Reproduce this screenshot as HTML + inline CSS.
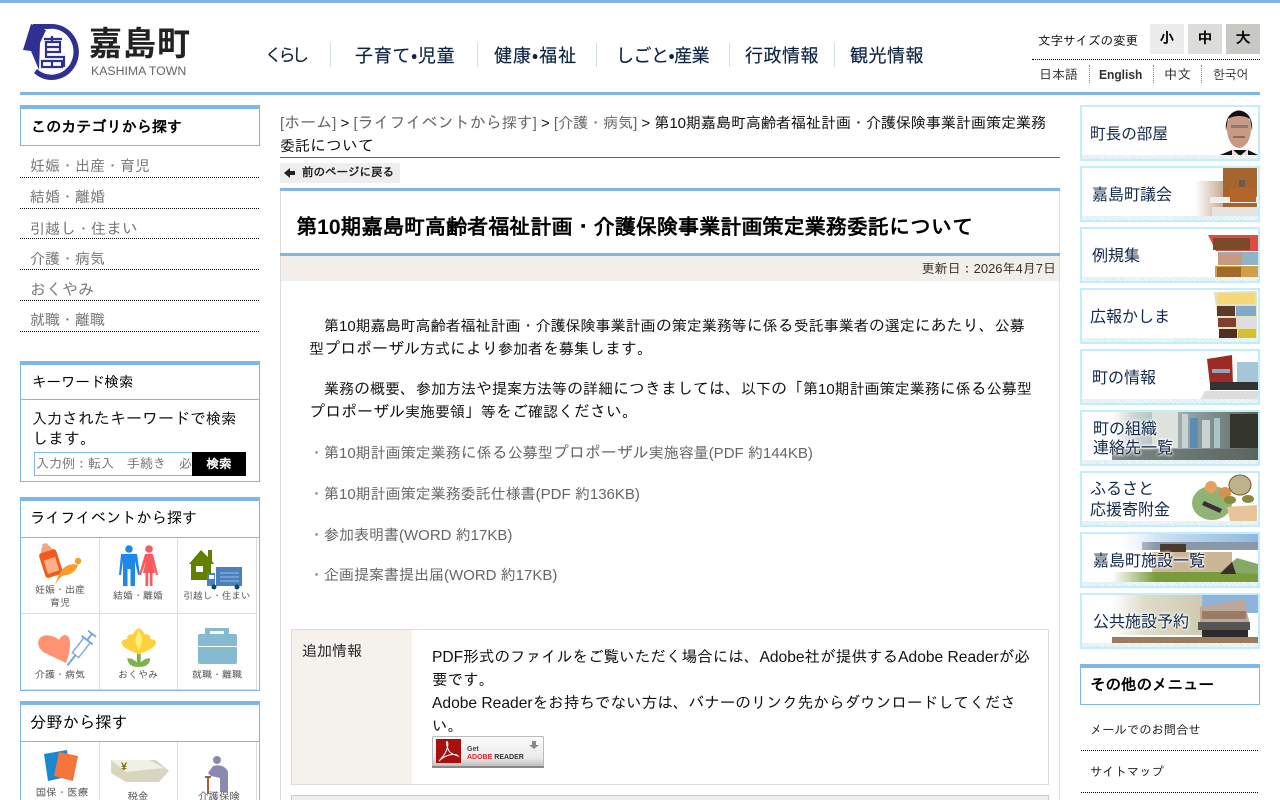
<!DOCTYPE html>
<html lang="ja"><head><meta charset="utf-8"><title>第10期嘉島町高齢者福祉計画・介護保険事業計画策定業務委託について</title>
<style>
html{margin:0;padding:0;background:#fff;width:1280px;height:800px;overflow:hidden;}
body{margin:0;padding:0;background:#fff;width:1280px;height:800px;overflow:hidden;position:relative;font-family:"Liberation Sans","IPAGothic",sans-serif;color:#000;font-size:15.200px;}
.a{position:absolute;white-space:nowrap;}
.t{font-size:16px;}
k{font-size:15px;}
.box{position:absolute;box-sizing:border-box;border:1px solid #7fb6e8;border-top:4px solid #7fb6e8;background:#fff;}
.g{color:#666;}
.nav{position:absolute;top:45px;font-family:"Liberation Sans","WenQuanYi Zen Hei",sans-serif;font-size:18px;color:#0c2340;white-space:nowrap;line-height:22px;-webkit-text-stroke:.15px #0c2340;}
.sep{position:absolute;top:43px;width:1px;height:24px;background:#cfe0e0;}
.cat{position:absolute;left:30px;color:#777;font-size:16px;line-height:20px;white-space:nowrap;}
.dot{position:absolute;left:20px;width:239px;border-top:1px dotted #000;height:0;}
.bn{position:absolute;left:1080px;width:180px;height:56px;box-sizing:border-box;border:2px solid #c2edfd;background:#fff;overflow:hidden;}
.bn i{position:absolute;left:0;right:0;bottom:0;height:4px;background:repeating-linear-gradient(45deg,#cfe6ee 0 1px,#fff 1px 2px);z-index:3;}
.bn svg{position:absolute;left:0;top:0;}
.bn b{position:absolute;font-family:"Liberation Sans","WenQuanYi Zen Hei",sans-serif;font-weight:normal;font-size:16px;color:#12294a;line-height:19px;white-space:nowrap;z-index:4;}
.cell{position:absolute;font-size:10px;color:#555;text-align:center;line-height:13px;white-space:nowrap;}
.ln{position:absolute;background:#ddd;}
.size{position:absolute;top:24px;width:34px;height:30px;text-align:center;line-height:30px;font-weight:bold;font-size:15px;}
</style></head><body>
<div class="a" style="left:0;top:0;width:1280px;height:3px;background:#7fb6e8"></div>
<div class="a" style="left:20px;top:92px;width:1240px;height:3px;background:#7fb6e8"></div>

<svg class="a" style="left:22px;top:23px" width="58" height="58" viewBox="0 0 58 58">
<path d="M9 1 L1 27 L9 28 L17 47 L18 20 L24 7 Z" fill="#2e3192"/>
<path d="M11 1 H30 A27 28 0 1 1 12 50 L15 46 A22 23 0 1 0 26 6 L11 6 Z" fill="#2e3192"/>
<path d="M22 16 H40 M30 13 V18 M24 19 H38 V29 H24 Z M24 24 H38 M24 29 V34 H42 V44 M20 38 H40 V44 H20 Z M30 38 V44" fill="none" stroke="#2e3192" stroke-width="2.200"/>
</svg>
<div class="a" style="left:89px;top:24px;font-size:33px;font-weight:bold;line-height:40px;color:#222;letter-spacing:1px;font-family:'Liberation Sans','Noto Sans CJK JP',sans-serif">嘉島町</div>
<div class="a" style="left:91px;top:64px;font-size:12.300px;line-height:15px;color:#666">KASHIMA TOWN</div>

<div class="nav" style="left:265px;font-size:17px;letter-spacing:-3.500px">くらし</div><div class="sep" style="left:330px"></div>
<div class="nav" style="left:355px;letter-spacing:.7px">子育て・児童</div><div class="sep" style="left:477px"></div>
<div class="nav" style="left:494px;letter-spacing:1px">健康・福祉</div><div class="sep" style="left:596px"></div>
<div class="nav" style="left:616px;letter-spacing:-.5px">しごと・産業</div><div class="sep" style="left:729px"></div>
<div class="nav" style="left:745px;letter-spacing:.5px">行政情報</div><div class="sep" style="left:834px"></div>
<div class="nav" style="left:850px;letter-spacing:.5px">観光情報</div>

<div class="a" style="left:1038px;top:33px;font-size:12.500px;line-height:16px;color:#111">文字サイズの変更</div>
<div class="size" style="left:1150px;background:#ececec">小</div>
<div class="size" style="left:1188px;background:#dcdcda">中</div>
<div class="size" style="left:1226px;background:#c8c8c5">大</div>
<div class="a" style="left:1032px;top:59px;width:228px;border-top:1px dotted #000"></div>
<div class="a" style="left:1039px;top:67px;font-size:13px;line-height:16px;color:#333">日本語</div>
<div class="a" style="left:1099px;top:67px;font-size:12.500px;line-height:16px;color:#333;font-weight:bold;transform-origin:0 0;transform:scaleX(.96)">English</div>
<div class="a" style="left:1164px;top:67px;font-size:13.500px;line-height:16px;color:#333">中文</div>
<div class="a" style="left:1213px;top:67px;font-size:12.500px;line-height:16px;color:#222;font-family:'Liberation Sans','NanumGothic',sans-serif">한국어</div>
<div class="a" style="left:1089px;top:65px;height:18px;border-left:1px dotted #888"></div>
<div class="a" style="left:1153px;top:65px;height:18px;border-left:1px dotted #888"></div>
<div class="a" style="left:1201px;top:65px;height:18px;border-left:1px dotted #888"></div>

<!-- left -->
<div class="box" style="left:20px;top:105px;width:240px;height:41px"></div>
<div class="a" style="left:31px;top:118px;font-size:15.100px;font-weight:bold;line-height:20px">このカテゴリから探す</div>
<div class="cat" style="top:157px"><k>妊娠・出産・育児</k></div><div class="dot" style="top:177px"></div>
<div class="cat" style="top:188px"><k>結婚・離婚</k></div><div class="dot" style="top:208px"></div>
<div class="cat" style="top:220px"><k>引越</k>し<k>・住</k>まい</div><div class="dot" style="top:238px"></div>
<div class="cat" style="top:250px"><k>介護・病気</k></div><div class="dot" style="top:269px"></div>
<div class="cat" style="top:281px">おくやみ</div><div class="dot" style="top:300px"></div>
<div class="cat" style="top:311px"><k>就職・離職</k></div><div class="dot" style="top:331px"></div>

<div class="box" style="left:20px;top:361px;width:240px;height:121px"></div>
<div class="a" style="left:20px;top:399px;width:240px;height:1px;background:#7fb6e8"></div>
<div class="a" style="left:32px;top:373px;font-size:14.500px;line-height:20px">キーワード検索</div>
<div class="a t" style="left:32px;top:410px;line-height:20px;color:#111"><k>入力</k>されたキーワードで<k>検索</k><br>します。</div>
<div class="a" style="left:34px;top:452px;width:158px;height:24px;box-sizing:border-box;border:1px solid #7fb6e8;border-right:0;overflow:hidden;color:#777;font-size:13px;line-height:22px;padding-left:1px">入力例：転入　手続き　必要書類</div>
<div class="a" style="left:192px;top:452px;width:54px;height:24px;background:#000;color:#fff;text-align:center;font-size:12.500px;font-weight:bold;line-height:24px">検索</div>

<div class="box" style="left:20px;top:497px;width:240px;height:194px"></div>
<div class="a" style="left:20px;top:537px;width:240px;height:1px;background:#7fb6e8"></div>
<div class="a" style="left:30px;top:509px;font-size:15.200px;line-height:20px">ライフイベントから探す</div>
<div class="ln" style="left:99px;top:538px;width:1px;height:152px"></div>
<div class="ln" style="left:177px;top:538px;width:1px;height:152px"></div>
<div class="ln" style="left:256px;top:538px;width:1px;height:152px"></div>
<div class="ln" style="left:21px;top:613px;width:236px;height:1px"></div>
<div class="ln" style="left:21px;top:689px;width:236px;height:1px"></div>

<svg class="a" style="left:21px;top:538px" width="238" height="152" viewBox="0 0 238 152">
<g transform="rotate(-18 28 23)"><rect x="20" y="13" width="18" height="26" rx="3" fill="#f25a1c"/><rect x="23" y="21" width="12" height="14" fill="#fbb08a"/><path d="M23 13 L25 8 H33 L35 13Z" fill="#f8a080"/><rect x="26" y="5" width="6" height="4" rx="2" fill="#f5a58a"/></g>
<circle cx="57" cy="23" r="3.200" fill="#fa9a28"/>
<path d="M34 47 C38 36 40 30 48 27 C52 26 55 26 57 27 C55 33 50 37 44 37 C40 38 37 42 34 47Z" fill="#fa9a28"/>
<g transform="translate(0,-5)">
<g fill="#1e88e8"><circle cx="108" cy="16" r="3.800"/><path d="M100 21 H116 L119 42 H117 L114 28 V53 H109.500 V36 H106.500 V53 H102 V28 L100 42 H98Z"/></g>
<g fill="#fa5a5e"><circle cx="128" cy="16" r="3.800"/><path d="M124 21 H132 L137 42 H135 L131 28 L134 40 H131.500 V53 H128.800 V40 H127.200 V53 H124.500 V40 H122 L125 28 L120 42 H118Z"/></g>
</g>
<path d="M168 26 L180 12 L187 19 V12 H191 V23 L193 26 H190 V42 H170 V26Z" fill="#627f00"/>
<rect x="175" y="28" width="7" height="6" fill="#fff"/>
<rect x="195" y="29" width="26" height="19" fill="#4a80bd"/><path d="M186 35 H194 V48 H186Z" fill="#4a80bd"/><rect x="188" y="37" width="5" height="4" fill="#fff"/>
<path d="M199 35 H218 M199 39 H218 M199 43 H218" stroke="#9cc0e0" stroke-width="1"/>
<circle cx="193" cy="49" r="2.500" fill="#0d4a60"/><circle cx="216" cy="49" r="2.500" fill="#0d4a60"/>
<path d="M45 125 L24 115 C12 108 17 94 30 98 C34 99 36 100 38 102 C42 94 49 96 49 105 C49 114 47 120 45 125Z" fill="#ff9374"/>
<g transform="rotate(38 60 110)" fill="none" stroke="#7ba8dc" stroke-width="1.400"><rect x="56" y="100" width="8" height="19" fill="#fff"/><path d="M60 119 V132 M60 100 V92 M55 92 H65 M53 100 H67" stroke-width="2"/></g>
<g transform="translate(0,77) scale(.95,.72) translate(6,0)">
<path d="M117 54 C110 50 100 46 100 38 C100 34 104 34 106 33 C105 28 109 26 112 27 C113 22 116 20 118 18 C120 20 123 22 124 27 C127 26 131 28 130 33 C132 34 136 34 136 38 C136 46 126 50 119 54Z" fill="#fdd13c"/>
<path d="M118 22 C114 30 113 40 118 48 C123 40 122 30 118 22Z" fill="#fff07a"/>
<path d="M116 54 H120 V72 H116Z M116 66 C112 60 108 60 106 60 C106 68 111 72 116 72Z M120 66 C124 60 128 60 130 60 C130 68 125 72 120 72Z" fill="#7cb14e"/>
</g>
<path d="M179 96 H214 Q216 96 216 98 V124 Q216 126 214 126 H179 Q177 126 177 124 V98 Q177 96 179 96Z" fill="#86bad0"/>
<path d="M184 96 V91 Q184 90 185 90 H207 Q208 90 208 91 V96 H203 V93 H189 V96Z" fill="#86bad0"/>
<rect x="177" y="108" width="39" height="1" fill="#fff"/>
</svg>
<div class="cell" style="left:22px;top:584px;width:76px;">妊娠・出産<br>育児</div>
<div class="cell" style="left:99px;top:590px;width:78px;">結婚・離婚</div>
<div class="cell" style="left:178px;top:590px;width:78px;font-size:9.600px">引越し・住まい</div>
<div class="cell" style="left:22px;top:669px;width:76px;">介護・病気</div>
<div class="cell" style="left:99px;top:669px;width:78px;">おくやみ</div>
<div class="cell" style="left:178px;top:669px;width:78px;">就職・離職</div>

<div class="box" style="left:20px;top:701px;width:240px;height:120px"></div>
<div class="a" style="left:20px;top:741px;width:240px;height:1px;background:#7fb6e8"></div>
<div class="a" style="left:30px;top:713px;font-size:16.300px;line-height:20px">分野から探す</div>
<div class="ln" style="left:99px;top:742px;width:1px;height:60px"></div>
<div class="ln" style="left:177px;top:742px;width:1px;height:60px"></div>
<div class="ln" style="left:256px;top:742px;width:1px;height:60px"></div>
<svg class="a" style="left:21px;top:742px" width="238" height="58" viewBox="0 0 238 58">
<path d="M23 12 L46 8 L50 34 L27 39Z" fill="#1a87d0"/><path d="M38 10 L57 14 L52 39 L33 34Z" fill="#f4743c"/>
<path d="M90 18 L135 18 L148 29 L138 40 L105 40 L90 31Z" fill="#d8d6bf"/><path d="M90 18 L128 18 L143 26 L105 30Z" fill="#f1f0e6"/><text x="100" y="28" font-size="11" font-weight="bold" fill="#7a6a00">¥</text>
<circle cx="196" cy="18" r="4" fill="#8a8ab0"/><path d="M192 24 C198 22 205 24 207 30 V50 H199 V36 L190 34 L187 31Z" fill="#8a8ab0"/><path d="M187 35 V52" stroke="#a0622c" stroke-width="2"/><path d="M184 35 H190" stroke="#a0622c" stroke-width="2"/>
</svg>
<div class="cell" style="left:22px;top:787px;width:80px;font-size:10.500px">国保・医療</div>
<div class="cell" style="left:99px;top:791px;width:78px;font-size:10.500px">税金</div>
<div class="cell" style="left:178px;top:791px;width:82px;font-size:10.500px">介護保険</div>

<!-- center -->
<div class="a t" style="left:280px;top:112px;width:790px;line-height:23px;color:#111"><span class="g"><k>[</k>ホーム<k>]</k></span><k> &gt; </k><span class="g"><k>[</k>ライフイベントから<k>探</k>す<k>]</k></span><k> &gt; </k><span class="g"><k>[介護・病気]</k></span><k> &gt; 第10期嘉島町高齢者福祉計画・介護保険事業計画策定業務</k><br><k>委託</k>について</div>
<div class="a" style="left:280px;top:157px;width:780px;height:1px;background:#666"></div>
<div class="a" style="left:280px;top:163px;width:120px;height:20px;background:#eee"></div>
<svg class="a" style="left:284px;top:167px" width="12" height="12" viewBox="0 0 12 12"><path d="M0 6 L6 1 V4 H11 V8 H6 V11Z" fill="#222"/></svg>
<div class="a" style="left:302px;top:165px;font-size:11.500px;line-height:16px;font-weight:bold;color:#222">前のページに戻る</div>

<div class="a" style="left:280px;top:188px;width:780px;height:620px;box-sizing:border-box;border-left:1px solid #ddd;border-right:1px solid #ddd"></div>
<div class="a" style="left:280px;top:188px;width:780px;height:3px;background:#7fb6e8"></div>
<div class="a" style="left:296px;top:214px;font-size:21.100px;font-weight:bold;line-height:28px;color:#000">第10期嘉島町高齢者福祉計画・介護保険事業計画策定業務委託について</div>
<div class="a" style="left:280px;top:253px;width:780px;height:3px;background:#7fb6e8"></div>
<div class="a" style="left:281px;top:256px;width:778px;height:25px;background:#f2eee9"></div>
<div class="a" style="right:224px;top:260px;font-size:13px;line-height:17px;color:#333">更新日：2026年4月7日</div>

<div class="a t" style="left:309px;top:315px;line-height:23px;color:#111"><k>　第10期嘉島町高齢者福祉計画・介護保険事業計画</k>の<k>策定業務等</k>に<k>係</k>る<k>受託事業者</k>の<k>選定</k>にあたり、<k>公募</k><br><k>型</k>プロポーザル<k>方式</k>により<k>参加者</k>を<k>募集</k>します。</div>
<div class="a t" style="left:309px;top:378px;line-height:23px;color:#111"><k>　業務</k>の<k>概要</k>、<k>参加方法</k>や<k>提案方法等</k>の<k>詳細</k>につきましては、<k>以下</k>の「<k>第10期計画策定業務</k>に<k>係</k>る<k>公募型</k><br>プロポーザル<k>実施要領</k>」<k>等</k>をご<k>確認</k>ください。</div>
<div class="a t g" style="left:309px;top:442px;line-height:23px"><k>・第10期計画策定業務</k>に<k>係</k>る<k>公募型</k>プロポーザル<k>実施容量(PDF 約144KB)</k></div>
<div class="a t g" style="left:309px;top:483px;line-height:23px"><k>・第10期計画策定業務委託仕様書(PDF 約136KB)</k></div>
<div class="a t g" style="left:309px;top:524px;line-height:23px"><k>・参加表明書(WORD 約17KB)</k></div>
<div class="a t g" style="left:309px;top:564px;line-height:23px"><k>・企画提案書提出届(WORD 約17KB)</k></div>

<div class="a" style="left:291px;top:629px;width:758px;height:156px;box-sizing:border-box;border:1px solid #ddd"></div>
<div class="a" style="left:292px;top:630px;width:120px;height:154px;background:#f5f2ee"></div>
<div class="a" style="left:302px;top:641px;line-height:22px;color:#222;font-size:15px">追加情報</div>
<div class="a" style="left:432px;top:646px;width:610px;white-space:normal;line-height:23px;color:#111;font-size:15.600px">PDF形式のファイルをご覧いただく場合には、Adobe社が提供するAdobe Readerが必<br>要です。<br>Adobe Readerをお持ちでない方は、バナーのリンク先からダウンロードしてくださ<br>い。</div>
<svg class="a" style="left:432px;top:736px" width="112" height="33" viewBox="0 0 112 33">
<defs><linearGradient id="ag" x1="0" y1="0" x2="0" y2="1"><stop offset="0" stop-color="#fafafa"/><stop offset=".7" stop-color="#ececec"/><stop offset="1" stop-color="#bbb"/></linearGradient></defs>
<rect x="0.500" y="0.500" width="111" height="30" rx="1" fill="url(#ag)" stroke="#bbb"/><rect x="0" y="30" width="112" height="2" fill="#888"/>
<rect x="4" y="3" width="25" height="24" fill="#a80f0f"/>
<path d="M7 25 C14 18 17 10 15.500 6 C14 4 14 9 17 15 C20 19 24 19 26 20 C24 17 14 18 7 25Z" fill="none" stroke="#fff" stroke-width="1"/>
<text x="35" y="15" font-size="7" font-weight="bold" fill="#444" font-family="Liberation Sans">Get</text>
<text x="35" y="23" font-size="7" font-weight="bold" fill="#e8202a" font-family="Liberation Sans">ADOBE<tspan fill="#333" dx="2">READER</tspan></text>
<path d="M100 5 H104 V9 H107 L102 13 L97 9 H100Z" fill="#888"/>
</svg>
<div class="a" style="left:291px;top:795px;width:758px;height:20px;box-sizing:border-box;border:1px solid #ccc;background:#eee"></div>

<!-- right banners -->
<div class="bn" style="top:105px"><b style="left:8px;top:18px;font-size:15.600px">町長の部屋</b><i></i>
<svg width="176" height="52"><path d="M138 48 L150 43 H166 L176 48 V52 H138Z" fill="#111"/><path d="M150 42 L158 49 L166 42 V52 H150Z" fill="#f4dde0"/><ellipse cx="157" cy="22" rx="12" ry="19" fill="#c89a86"/><path d="M144 24 C141 -3 173 -3 170 24 L168 12 C162 8 152 8 146 12Z" fill="#111"/><rect x="149" y="18" width="17" height="3" fill="#666" opacity=".6"/><rect x="151" y="29" width="12" height="2" fill="#8a6a5a"/></svg></div>
<div class="bn" style="top:166px"><b style="left:10px;top:18px">嘉島町議会</b><i></i>
<svg width="176" height="52"><defs><linearGradient id="f1" x1="0" x2="1"><stop offset="0" stop-color="#fff"/><stop offset="1" stop-color="#c3a58c"/></linearGradient></defs><rect x="113" y="13" width="30" height="35" fill="url(#f1)"/><rect x="141" y="0" width="34" height="48" fill="#a6652e"/><rect x="128" y="29" width="48" height="6" fill="#eee"/><rect x="130" y="39" width="46" height="9" fill="#e4e4e0"/><rect x="148" y="20" width="26" height="14" fill="#b5652a"/><rect x="157" y="12" width="6" height="7" fill="#6a5a50"/></svg></div>
<div class="bn" style="top:227px"><b style="left:10px;top:18px">例規集</b><i></i>
<svg width="176" height="52"><path d="M126 6 H176 V22 H134 Z" fill="#e04b3f"/><rect x="131" y="9" width="37" height="12" fill="#7a4a2b"/><path d="M136 23 H176 V36 H136Z" fill="#8fb4c8"/><rect x="136" y="24" width="24" height="12" fill="#c99a7f"/><path d="M133 37 H176 V48 H133Z" fill="#d0a048"/><rect x="135" y="38" width="24" height="10" fill="#a06a2c"/></svg></div>
<div class="bn" style="top:288px"><b style="left:8px;top:18px">広報かしま</b><i></i>
<svg width="176" height="52"><path d="M132 2 L175 1 V48 L138 49Z" fill="#e8e0b8"/><rect x="135" y="16" width="18" height="10" fill="#5a3a2a"/><rect x="154" y="16" width="20" height="10" fill="#80a8c8"/><rect x="136" y="28" width="18" height="9" fill="#804030"/><rect x="155" y="28" width="20" height="9" fill="#ddd"/><rect x="137" y="39" width="18" height="9" fill="#503020"/><rect x="156" y="39" width="18" height="9" fill="#d4c030"/><rect x="135" y="3" width="38" height="11" fill="#f5d878"/></svg></div>
<div class="bn" style="top:349px"><b style="left:10px;top:18px">町の情報</b><i></i>
<svg width="176" height="52"><path d="M123 40 H176 V49 H118Z" fill="#ddd"/><rect x="155" y="11" width="21" height="28" fill="#a6c5d8"/><path d="M125 8 L150 4 L151 34 L128 34Z" fill="#9c2a26"/><rect x="128" y="31" width="48" height="8" fill="#333"/><rect x="130" y="18" width="18" height="4" fill="#8ab"/></svg></div>
<div class="bn" style="top:410px"><b style="left:11px;top:8px;text-shadow:0 0 3px #fff,0 0 3px #fff,0 0 3px #fff">町の組織<br>連絡先一覧</b><i></i>
<svg width="176" height="52"><defs><linearGradient id="f2" x1="0" x2="1"><stop offset="0" stop-color="#fff"/><stop offset=".15" stop-color="#cdd6d4"/><stop offset=".55" stop-color="#8ea0a4"/><stop offset="1" stop-color="#5c6458"/></linearGradient></defs><rect x="30" y="0" width="146" height="48" fill="url(#f2)"/><rect x="70" y="0" width="26" height="36" fill="#dfe2dc"/><rect x="100" y="2" width="6" height="34" fill="#c8d2d0"/><rect x="108" y="6" width="8" height="30" fill="#5c8cb4"/><rect x="120" y="8" width="8" height="28" fill="#c8d2d0"/><rect x="132" y="6" width="6" height="30" fill="#a8c4c4"/><rect x="148" y="2" width="28" height="34" fill="#34362e"/><rect x="30" y="37" width="146" height="11" fill="#5d6660" opacity=".75"/></svg></div>
<div class="bn" style="top:471px"><b style="left:8px;top:6px;line-height:21px">ふるさと<br>応援寄附金</b><i></i>
<svg width="176" height="52"><ellipse cx="130" cy="30" rx="20" ry="17" fill="#7ba65a" opacity=".85"/><circle cx="129" cy="14" r="6" fill="#e8a060"/><circle cx="143" cy="20" r="6" fill="#d89050"/><ellipse cx="158" cy="12" rx="11" ry="10" fill="#bdb28a" stroke="#7a5a2a"/><ellipse cx="148" cy="27" rx="6" ry="4" fill="#8a8a40"/><ellipse cx="166" cy="26" rx="6" ry="4" fill="#8a8a40"/><path d="M145 34 L175 32 V48 H148Z" fill="#e8c49a"/><path d="M122 28 L140 36 L138 40 L120 32Z" fill="#3a2c3c"/></svg></div>
<div class="bn" style="top:532px"><b style="left:11px;top:18px;text-shadow:0 0 3px #fff,0 0 3px #fff,0 0 3px #fff">嘉島町施設一覧</b><i></i>
<svg width="176" height="52"><defs><linearGradient id="f3" x1="0" x2="1"><stop offset="0" stop-color="#fff"/><stop offset=".4" stop-color="#c5dcf0"/><stop offset="1" stop-color="#8db8e0"/></linearGradient><linearGradient id="f3b" x1="0" x2="1"><stop offset="0" stop-color="#fff"/><stop offset=".3" stop-color="#fff" stop-opacity="0"/></linearGradient></defs><rect x="30" y="0" width="146" height="16" fill="url(#f3)"/><rect x="60" y="8" width="116" height="8" fill="#8a98a8"/><rect x="78" y="10" width="26" height="18" fill="#4a3a2c"/><rect x="70" y="18" width="80" height="20" fill="#cbb698"/><rect x="30" y="38" width="146" height="10" fill="#7a9c3c"/><path d="M138 38 L155 24 L176 30 V40Z" fill="#88a86a"/><path d="M138 40 L150 28 L154 40Z" fill="#3a3028"/><rect x="30" y="0" width="146" height="48" fill="url(#f3b)"/></svg></div>
<div class="bn" style="top:593px"><b style="left:11px;top:18px;text-shadow:0 0 3px #fff,0 0 3px #fff,0 0 3px #fff">公共施設予約</b><i></i>
<svg width="176" height="52"><defs><linearGradient id="f4" x1="0" x2="1"><stop offset="0" stop-color="#fff"/><stop offset=".35" stop-color="#dfdcc8"/><stop offset="1" stop-color="#cfc8b0"/></linearGradient></defs><rect x="30" y="0" width="94" height="40" fill="url(#f4)"/><rect x="120" y="0" width="56" height="18" fill="#8fb4dc"/><path d="M118 12 L162 4 L168 30 H118Z" fill="#bba898"/><rect x="120" y="16" width="44" height="8" fill="#9a7c66"/><rect x="116" y="27" width="52" height="8" fill="#555"/><rect x="120" y="35" width="46" height="8" fill="#2c2c2c"/><rect x="30" y="42" width="146" height="6" fill="#9a7c5c"/></svg></div>

<div class="box" style="left:1080px;top:664px;width:180px;height:41px"></div>
<div class="a" style="left:1090px;top:676px;font-size:15.500px;font-weight:bold;line-height:20px">その他のメニュー</div>
<div class="a" style="left:1090px;top:722px;font-size:12.300px;line-height:16px;color:#222">メールでのお問合せ</div>
<div class="a" style="left:1081px;top:750px;width:177px;border-top:1px dotted #000"></div>
<div class="a" style="left:1090px;top:764px;font-size:12.300px;line-height:16px;color:#222">サイトマップ</div>
<div class="a" style="left:1081px;top:792px;width:177px;border-top:1px dotted #000"></div>
</body></html>
